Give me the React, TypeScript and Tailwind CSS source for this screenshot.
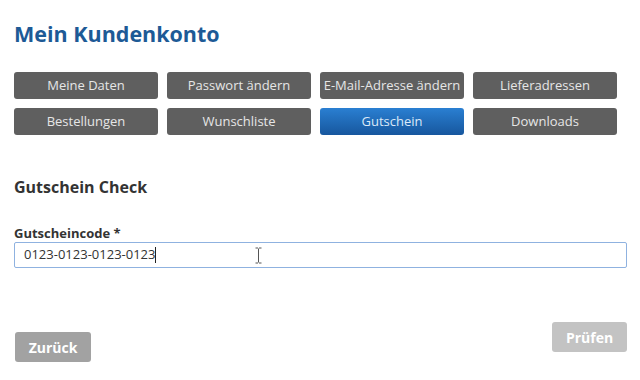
import React from "react";

const btns = [
  "Meine Daten",
  "Passwort ändern",
  "E-Mail-Adresse ändern",
  "Lieferadressen",
  "Bestellungen",
  "Wunschliste",
  "Gutschein",
  "Downloads",
];

export default function App() {
  return (
    <div
      className="w-[640px] h-[380px] bg-white relative overflow-hidden"
      style={{ fontFamily: '"Open Sans", "Noto Sans", sans-serif' }}
    >
      <div className="pl-[14px] pr-[13px]">
        <h1 className="pt-[20px] text-[21.5px] leading-[28px] font-bold text-[#1d5a96]">
          Mein Kundenkonto
        </h1>
        <div className="mt-[24px] grid grid-cols-[144px_144px_144px_144px] gap-[9px]">
          {btns.map((b) => (
            <div
              key={b}
              className={
                b === "Gutschein"
                  ? "h-[27px] rounded-[3px] flex items-center justify-center text-[13px] text-[#dbe9f8] bg-gradient-to-b from-[#2a7fd2] to-[#17579e]"
                  : "h-[27px] rounded-[3px] flex items-center justify-center text-[13px] text-[#e6e6e6] bg-[#5f5f5f]"
              }
            >
              {b}
            </div>
          ))}
        </div>
        <h2 className="mt-[42px] text-[16px] leading-[20px] font-bold text-[#333]">
          Gutschein Check
        </h2>
        <label className="block mt-[28px] text-[13px] leading-[16px] font-bold text-[#333]">
          Gutscheincode *
        </label>
        <div className="mt-[1px] h-[26px] border border-[#8fb2e0] rounded-[2px] flex items-center pl-[9px] text-[13px] text-[#333] relative">
          <span>0123-0123-0123-0123</span>
          <span className="inline-block w-[1px] h-[16px] bg-[#222]" />
          <svg
            className="absolute left-[240px] top-[4px]"
            width="7"
            height="17"
            viewBox="0 0 7 17"
          >
            <path
              d="M0.5 1h2.5M4 1h2.5M3.5 1.5v14M0.5 16h2.5M4 16h2.5"
              stroke="#555"
              strokeWidth="1"
              fill="none"
            />
          </svg>
        </div>
        <div className="mt-[54px] flex justify-between items-start">
          <div className="ml-[1px] mt-[10px] w-[76px] h-[30px] rounded-[3px] bg-[#a2a2a2] text-white font-bold text-[14px] flex items-center justify-center">
            Zurück
          </div>
          <div className="w-[75px] h-[30px] rounded-[3px] bg-[#c3c3c3] text-white font-bold text-[14px] flex items-center justify-center">
            Prüfen
          </div>
        </div>
      </div>
    </div>
  );
}
